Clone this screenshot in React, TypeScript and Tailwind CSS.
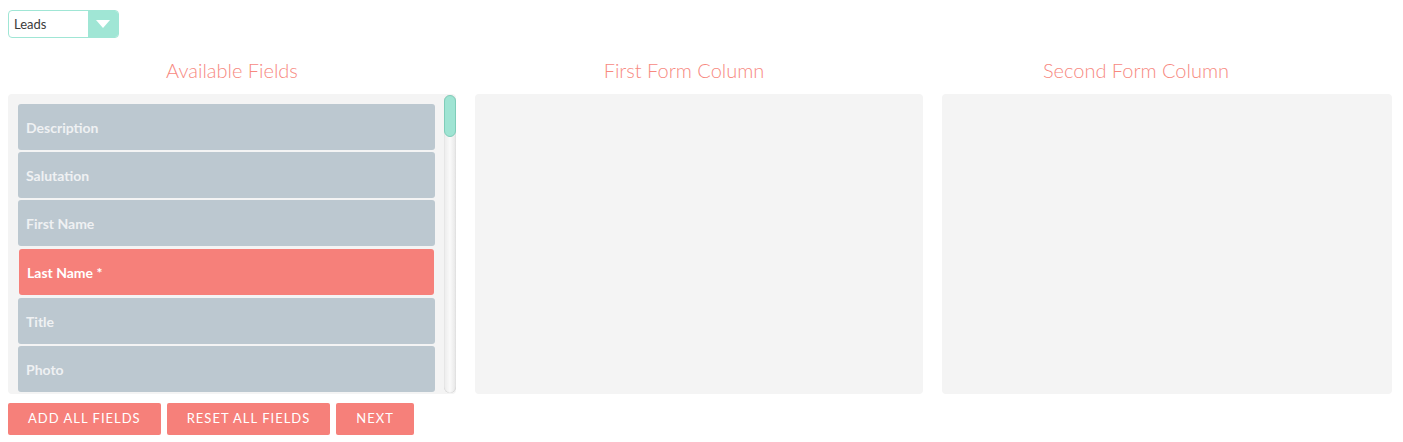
import React from "react";

const fields = [
  { label: "Description" },
  { label: "Salutation" },
  { label: "First Name" },
  { label: "Last Name *", required: true },
  { label: "Title" },
  { label: "Photo" },
];

function FieldItem({ label, required }: { label: string; required?: boolean }) {
  if (required) {
    return (
      <div className="mx-px my-px flex h-[46px] shrink-0 items-center rounded-[3px] bg-[#f6807a] px-[8px] pt-px text-[14px] font-bold text-white">
        {label}
      </div>
    );
  }
  return (
    <div className="flex h-[46px] shrink-0 items-center rounded-[3px] bg-[#bcc8d0] px-[8px] pt-px text-[14px] font-bold text-[#eff1f3]">
      {label}
    </div>
  );
}

function Scrollbar() {
  return (
    <div className="relative w-[12px] shrink-0 rounded-[6px] bg-gradient-to-r from-[#ebebeb] via-[#fafafa] to-[#e6e6e6] shadow-[inset_0_0_1px_rgba(0,0,0,0.25)]">
      <div className="absolute left-0 top-0 h-[42px] w-[12px] rounded-[6px] border border-[#7fcdb9] bg-[#9fe4d3]" />
    </div>
  );
}

export default function App() {
  return (
    <div
      className="min-h-[442px] w-full bg-white pl-[8px] pr-[12px] pt-[10px]"
      style={{ fontFamily: "Lato, 'Open Sans', sans-serif" }}
    >
      <div className="flex h-[28px] w-[111px] overflow-hidden rounded-[4px] border border-[#a0e6d5] bg-white">
        <div className="flex flex-1 items-center pl-[5px] pt-[2px] text-[13px] text-[#3a3a3a]">Leads</div>
        <div className="flex w-[30px] items-center justify-center bg-[#a0e6d5]">
          <svg width="14" height="9" viewBox="0 0 14 9">
            <path d="M0 0 L14 0 L7 8 Z" fill="#fff" />
          </svg>
        </div>
      </div>

      <div className="-ml-[2px] mt-[18px] grid w-[1356px] grid-cols-3">
        <h2 className="text-center text-[20px] font-light leading-[28px] text-[#f7897f]">Available Fields</h2>
        <h2 className="text-center text-[20px] font-light leading-[28px] text-[#f7897f]">First Form Column</h2>
        <h2 className="text-center text-[20px] font-light leading-[28px] text-[#f7897f]">Second Form Column</h2>
      </div>

      <div className="mt-[10px] grid grid-cols-[448px_448px_450px] gap-x-[19px]">
        <div className="flex h-[300px] rounded-[4px] bg-[#f4f4f4] pb-[1px] pl-[10px] pt-[1px]">
          <div className="mt-[9px] flex flex-1 flex-col gap-[2px] overflow-hidden">
            {fields.map((f) => (
              <FieldItem key={f.label} label={f.label} required={f.required} />
            ))}
          </div>
          <div className="ml-[9px] flex">
            <Scrollbar />
          </div>
        </div>
        <div className="h-[300px] rounded-[4px] bg-[#f4f4f4]" />
        <div className="h-[300px] rounded-[4px] bg-[#f4f4f4]" />
      </div>

      <div className="mt-[9px] flex gap-[6px]">
        {["Add All Fields", "Reset All Fields", "Next"].map((b) => (
          <button
            key={b}
            className="h-[32px] rounded-[2px] bg-[#f6807a] px-[20px] text-[13px] uppercase tracking-[1px] text-white"
          >
            {b}
          </button>
        ))}
      </div>
    </div>
  );
}
